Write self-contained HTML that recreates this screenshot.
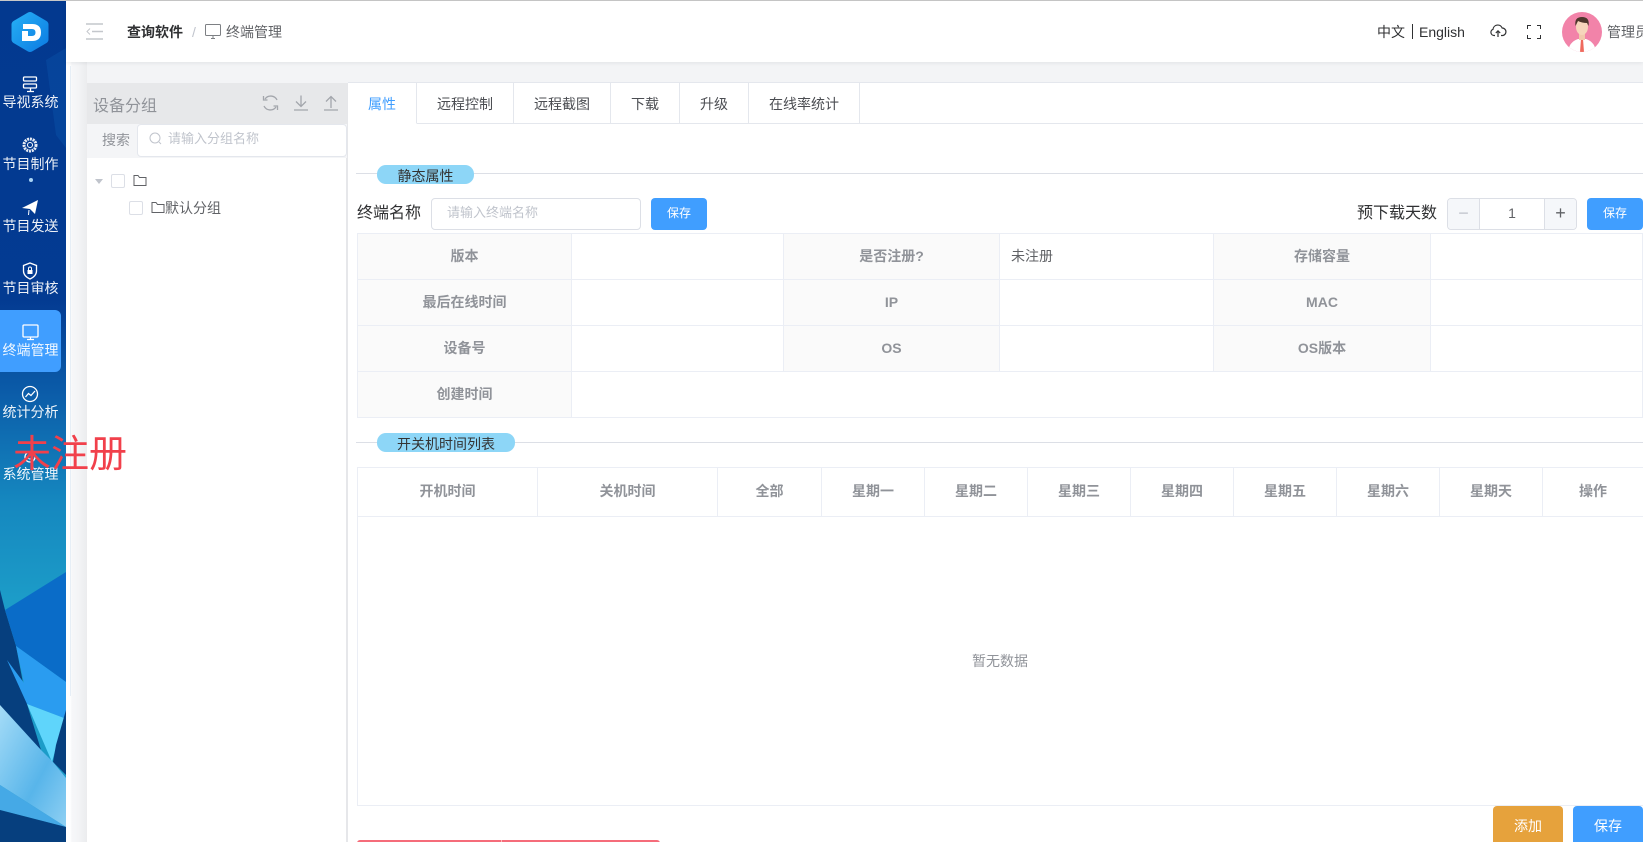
<!DOCTYPE html>
<html lang="zh"><head><meta charset="utf-8"><title>终端管理</title>
<style>
*{box-sizing:border-box;margin:0;padding:0}
html,body{width:1643px;height:842px;overflow:hidden;background:#fff}
body{position:relative;font-family:"Liberation Sans","Noto Sans CJK SC",sans-serif;font-size:14px;color:#606266}
.a{position:absolute}
.t{position:absolute;white-space:nowrap;line-height:20px}
.c{text-align:center}
.nav{position:absolute;left:0;width:61px;text-align:center;color:#fff;font-size:14px;line-height:18px;white-space:nowrap;opacity:.93}
.tab{position:absolute;top:83px;height:41px;border-right:1px solid #e4e7ed;border-bottom:1px solid #e4e7ed;text-align:center;line-height:43px;font-size:14px;color:#4b4d52;background:#fff}
.cell{position:absolute;border-right:1px solid #ebeef5;border-bottom:1px solid #ebeef5;height:46px;line-height:45px;text-align:center;font-size:14px;font-weight:700;color:#909399}
.g{background:#fafafa}
.hc{position:absolute;top:468px;height:49px;border-right:1px solid #ebeef5;border-bottom:1px solid #ebeef5;line-height:47px;text-align:center;font-size:14px;font-weight:700;color:#909399;background:#fff}
.btn{position:absolute;background:#409eff;color:#fff;border-radius:4px;text-align:center}
.pill{position:absolute;background:#8dd6f7;border-radius:9px;color:#333;text-align:center;font-size:14px;line-height:22px;height:19px;overflow:hidden}
.line{position:absolute;left:356px;right:0;height:1px;background:#dcdfe6}
.cb{position:absolute;width:14px;height:14px;border:1px solid #dcdfe6;border-radius:2px;background:#fff}
</style></head><body>

<!-- sidebar -->
<div class="a" style="left:0;top:0;width:66px;height:842px;overflow:hidden;background:linear-gradient(180deg,#03398f 0,#033b92 300px,#0b5ba8 390px,#1587bf 500px,#1c9cc8 600px)">
<svg class="a" style="left:0;top:0" width="66" height="842" viewBox="0 0 66 842">
<defs><linearGradient id="ice" x1="0" y1="0" x2="1" y2="1"><stop offset="0" stop-color="#a5dcf7"/><stop offset=".6" stop-color="#58b5ea"/><stop offset="1" stop-color="#8fd0f3"/></linearGradient></defs>
<polygon points="46,60 66,48 66,148 56,135" fill="#0a4fa5" opacity=".5"/>
<polygon points="0,590 5,610 16,646 27,704 41,750 0,706" fill="#063f7e"/>
<polygon points="5,610 66,572 66,682 16,646" fill="#0a6cc8"/>
<polygon points="16,646 66,682 66,712 64,718 27,704 7,660 24,683" fill="#2a9cf0"/>
<polygon points="27,704 64,718 52,762" fill="#5fd5fb"/>
<polygon points="66,710 56,745 53,762 66,775" fill="#063f7e"/>
<polygon points="0,705 41,750 53,762 66,778 66,827 0,785" fill="url(#ice)"/>
<polygon points="0,785 66,827 0,810" fill="#45a9e6"/>
<polygon points="0,810 66,827 66,842 0,842" fill="#063f7e"/>
</svg>
<!-- logo -->
<svg class="a" style="left:11px;top:11px" width="38" height="42" viewBox="0 0 38 42">
<defs><linearGradient id="lg" x1="0" y1="0" x2="1" y2="1"><stop offset="0" stop-color="#27b0f5"/><stop offset="1" stop-color="#0b7ae2"/></linearGradient></defs>
<path d="M17 1.500 Q19 .5 21 1.500 L35.500 10 Q37.500 11.500 37.500 13.500 L37.500 28.500 Q37.500 30.500 35.500 32 L21 40.500 Q19 41.500 17 40.500 L2.500 32 Q.5 30.500 .5 28.500 L.5 13.500 Q.5 11.500 2.500 10Z" fill="url(#lg)"/>
<path d="M12 13 H21 Q30 13 30 21.500 Q30 30 21 30 H11 V20 H17 V25 H21 Q24.500 25 24.500 21.500 Q24.500 18 21 18 H12Z" fill="#fff"/>
</svg>
<div class="a" style="left:0;top:310px;width:61px;height:62px;background:#409eff;border-radius:0 6px 6px 0"></div>
<svg class="a" style="left:0;top:0" width="66" height="500" fill="none" stroke="#fff" stroke-width="1.300">
<path d="M24.500 77h11a1 1 0 0 1 1 1v2a1 1 0 0 1-1 1h-11a1 1 0 0 1-1-1v-2a1 1 0 0 1 1-1zM24.500 84h11a1 1 0 0 1 1 1v2a1 1 0 0 1-1 1h-11a1 1 0 0 1-1-1v-2a1 1 0 0 1 1-1zM30.500 88v3M27 91.500h7"/>
<circle cx="30" cy="145" r="6" stroke-width="3" stroke-dasharray="2 .8" opacity=".9"/><circle cx="30" cy="145" r="2.500" stroke-width="1"/>
<path d="M22 208 L38 200 L35 214 L30 209Z" fill="#fff" stroke="none"/><path d="M29 210 L28.500 215" stroke-width="1"/>
<path d="M30 263 L36.500 265.500 V271 Q36.500 276 30 279 Q23.500 276 23.500 271 V265.500Z"/><rect x="27.500" y="270" width="5" height="4" fill="#fff" stroke="none"/><path d="M28.500 270 v-1.500 a1.500 1.500 0 0 1 3 0 v1.500" stroke-width="1"/>
<rect x="23" y="325" width="15" height="12" rx="1"/><path d="M30.500 337v2M27 339.500h7" stroke-width="1.200"/>
<circle cx="30" cy="394" r="7.500"/><path d="M25.500 397 L28.500 393.500 L31 395.500 L35 391" stroke-width="1.300"/>
<circle cx="30" cy="457" r="5"/><circle cx="30" cy="457" r="2" stroke-width="1"/>
</svg>
<div class="nav" style="top:93px">导视系统</div>
<div class="nav" style="top:155px">节目制作</div>
<div class="a" style="left:29px;top:178px;width:4px;height:4px;border-radius:50%;background:#a9d4f5"></div>
<div class="nav" style="top:217px">节目发送</div>
<div class="nav" style="top:279px">节目审核</div>
<div class="nav" style="top:341px">终端管理</div>
<div class="nav" style="top:403px">统计分析</div>
<div class="nav" style="top:465px">系统管理</div>
</div>

<!-- topbar -->
<div class="a" style="left:66px;top:0;right:0;height:1px;background:#c8c8c8"></div>
<div class="a" style="left:0;top:0;width:66px;height:1px;background:#c8c8c8"></div>
<div class="a" style="left:66px;top:1px;right:0;height:61px;background:#fff;box-shadow:0 1px 4px rgba(0,21,41,.08);z-index:3"></div>
<div class="a" style="left:66px;top:62px;right:0;height:780px;background:#f3f4f6"></div>
<div class="a" style="left:66px;top:62px;width:21px;height:780px;background:linear-gradient(90deg,#fff 0,#fff 4px,#f6f7f9 6px,#f3f4f6 60%,#ebecee 100%)"></div>
<div class="a" style="left:70px;top:66px;width:1px;height:630px;background:#e6eef6"></div>
<div style="position:absolute;left:0;top:0;z-index:5;width:1643px;height:62px">
<svg class="a" style="left:86px;top:23px" width="18" height="17" fill="none" stroke="#c4c7cc" stroke-width="1.500">
<path d="M0 1h17M6 8.500h11M0 16h17"/><path d="M4 5.500 L1 8.500 L4 11.500" stroke-width="1"/></svg>
<div class="t" style="left:127px;top:22px;font-size:14px;font-weight:700;color:#303133">查询软件</div>
<div class="t" style="left:192px;top:22px;color:#c0c4cc">/</div>
<svg class="a" style="left:205px;top:24px" width="17" height="16" fill="none" stroke="#7d8084" stroke-width="1"><rect x=".5" y=".5" width="15" height="11" rx="1"/><path d="M8 11.500v3M6 14.500h4"/></svg>
<div class="t" style="left:226px;top:22px;font-size:14px;color:#606266">终端管理</div>
<div class="t" style="left:1377px;top:22px;font-size:14px;color:#303133">中文</div>
<div class="a" style="left:1412px;top:24px;width:1px;height:15px;background:#303133"></div>
<div class="t" style="left:1419px;top:22px;font-size:14px;color:#303133">English</div>
<svg class="a" style="left:1490px;top:23px" width="17" height="16" fill="none" stroke="#303133" stroke-width="1.200"><path d="M5 12.500 H4 A3.200 3.200 0 0 1 3 6.300 A4.800 4.800 0 0 1 12.200 5 A3.800 3.800 0 0 1 13 12.500 H11"/><path d="M8 14V8M5.800 10 L8 7.800 L10.200 10"/></svg>
<svg class="a" style="left:1527px;top:25px" width="15" height="15" fill="none" stroke="#303133" stroke-width="1"><path d="M.5 4V.5H4M10 .5h3.500V4M13.500 10v3.500H10M4 13.500H.5V10"/></svg>
<svg class="a" style="left:1562px;top:12px" width="40" height="40" viewBox="0 0 40 40">
<clipPath id="av"><circle cx="20" cy="20" r="20"/></clipPath>
<g clip-path="url(#av)"><rect width="40" height="40" fill="#f283a9"/>
<path d="M6 40 Q7 30 16 27 L24 27 Q33 30 34 40Z" fill="#fff"/>
<path d="M19 27h2l1 13h-4z" fill="#ef6a5e"/>
<rect x="17" y="21" width="6" height="7" fill="#f2c9ad"/>
<ellipse cx="20" cy="15" rx="6" ry="8" fill="#f6d5bb"/>
<path d="M13.500 14 Q12 5 20 5 Q28 5 26.500 14 L25 11 Q20 11 16 9 L15 11Z" fill="#4e362c"/></g></svg>
<div class="t" style="left:1607px;top:22px;font-size:14px;color:#606266">管理员</div>
</div>

<!-- left panel -->
<div class="a" style="left:87px;top:83px;width:261px;height:759px;background:#fff;border-right:2px solid #e6e7ea"></div>
<div class="a" style="left:87px;top:83px;width:260px;height:41px;background:#e7e8ea"></div>
<div class="a" style="left:87px;top:124px;width:260px;height:34px;background:#f4f5f7"></div>
<div class="t" style="left:93px;top:97px;font-size:16px;color:#909399">设备分组</div>
<svg class="a" style="left:262px;top:94px" width="78" height="18" fill="none" stroke="#a3a6ac" stroke-width="1.300">
<path d="M15 6 A7 7 0 0 0 3 5 M1.500 2 V6 H5.500 M2 12 A7 7 0 0 0 14 13 M15.500 16 V12 H11.500"/>
<path d="M39 1.500V12M34 7.500 L39 12.500 L44 7.500M32 16h14"/>
<path d="M69 14 V3M64 7.500 L69 2.500 L74 7.500M62 16h14"/>
</svg>
<div class="t" style="left:102px;top:130px;font-size:14px;color:#909399">搜索</div>
<div class="a" style="left:137px;top:124px;width:210px;height:33px;background:#fff;border:1px solid #e4e7ed;border-radius:4px"></div>
<svg class="a" style="left:148px;top:131px" width="14" height="15" fill="none" stroke="#c0c4cc" stroke-width="1"><circle cx="7" cy="7" r="5"/><path d="M11 11l2 2"/></svg>
<div class="t" style="left:168px;top:129px;font-size:13px;color:#c0c4cc">请输入分组名称</div>
<div class="a" style="left:95px;top:179px;border:4px solid transparent;border-top:5px solid #c0c4cc"></div>
<div class="cb" style="left:111px;top:174px"></div>
<svg class="a" style="left:133px;top:174px" width="14" height="12" fill="none" stroke="#606266" stroke-width="1"><path d="M1 1.500h4l1.500 2H13v8H1z"/></svg>
<div class="cb" style="left:129px;top:201px"></div>
<svg class="a" style="left:151px;top:201px" width="14" height="12" fill="none" stroke="#606266" stroke-width="1"><path d="M1 1.500h4l1.500 2H13v8H1z"/></svg>
<div class="t" style="left:165px;top:198px;font-size:14px;color:#606266">默认分组</div>

<!-- main -->
<div class="a" style="left:348px;top:82px;right:0;height:760px;background:#fff;border-top:1px solid #e4e7ed"></div>
<div class="a" style="left:348px;top:83px;right:0;height:41px;border-bottom:1px solid #e4e7ed"></div>
<div class="tab" style="left:348px;width:69px;color:#409eff;border-bottom-color:#fff">属性</div>
<div class="tab" style="left:417px;width:97px">远程控制</div>
<div class="tab" style="left:514px;width:97px">远程截图</div>
<div class="tab" style="left:611px;width:69px">下载</div>
<div class="tab" style="left:680px;width:69px">升级</div>
<div class="tab" style="left:749px;width:111px">在线率统计</div>

<div class="line" style="top:173px"></div>
<div class="pill" style="left:377px;top:165px;width:97px">静态属性</div>
<div class="t" style="left:357px;top:204px;font-size:16px;color:#303133">终端名称</div>
<div class="a" style="left:431px;top:198px;width:210px;height:32px;border:1px solid #dcdfe6;border-radius:4px;background:#fff"></div>
<div class="t" style="left:447px;top:203px;font-size:13px;color:#c0c4cc">请输入终端名称</div>
<div class="btn" style="left:651px;top:198px;width:56px;height:32px;line-height:31px;font-size:12px">保存</div>

<div class="t" style="left:1357px;top:204px;font-size:16px;color:#303133">预下载天数</div>
<div class="a" style="left:1447px;top:198px;width:130px;height:32px;border:1px solid #dcdfe6;border-radius:4px;background:#fff"></div>
<div class="a c" style="left:1448px;top:199px;width:32px;height:30px;background:#f5f7fa;border-right:1px solid #dcdfe6;border-radius:4px 0 0 4px;line-height:29px;font-size:18px;color:#c0c4cc">−</div>
<div class="a c" style="left:1544px;top:199px;width:32px;height:30px;background:#f5f7fa;border-left:1px solid #dcdfe6;border-radius:0 4px 4px 0;line-height:29px;font-size:18px;color:#606266">+</div>
<div class="t c" style="left:1480px;top:203px;width:64px;font-size:14px;color:#606266">1</div>
<div class="btn" style="left:1587px;top:198px;width:56px;height:32px;line-height:31px;font-size:12px">保存</div>

<!-- info table -->
<div class="a" style="left:357px;top:233px;width:1286px;height:1px;background:#ebeef5"></div>
<div class="a" style="left:357px;top:233px;width:1px;height:185px;background:#ebeef5"></div>
<div class="cell g" style="left:358px;top:234px;width:214px">版本</div>
<div class="cell" style="left:572px;top:234px;width:212px"></div>
<div class="cell g" style="left:784px;top:234px;width:216px">是否注册?</div>
<div class="cell" style="left:1000px;top:234px;width:214px;text-align:left;padding-left:11px;font-weight:400;color:#606266">未注册</div>
<div class="cell g" style="left:1214px;top:234px;width:217px">存储容量</div>
<div class="cell" style="left:1431px;top:234px;width:212px"></div>
<div class="cell g" style="left:358px;top:280px;width:214px">最后在线时间</div>
<div class="cell" style="left:572px;top:280px;width:212px"></div>
<div class="cell g" style="left:784px;top:280px;width:216px">IP</div>
<div class="cell" style="left:1000px;top:280px;width:214px"></div>
<div class="cell g" style="left:1214px;top:280px;width:217px">MAC</div>
<div class="cell" style="left:1431px;top:280px;width:212px"></div>
<div class="cell g" style="left:358px;top:326px;width:214px">设备号</div>
<div class="cell" style="left:572px;top:326px;width:212px"></div>
<div class="cell g" style="left:784px;top:326px;width:216px">OS</div>
<div class="cell" style="left:1000px;top:326px;width:214px"></div>
<div class="cell g" style="left:1214px;top:326px;width:217px">OS版本</div>
<div class="cell" style="left:1431px;top:326px;width:212px"></div>
<div class="cell g" style="left:358px;top:372px;width:214px">创建时间</div>
<div class="cell" style="left:572px;top:372px;width:1071px"></div>

<!-- schedule table -->
<div class="line" style="top:442px"></div>
<div class="pill" style="left:377px;top:433px;width:138px">开关机时间列表</div>
<div class="a" style="left:357px;top:467px;width:1286px;height:339px;border:1px solid #ebeef5;border-right:0"></div>
<div class="hc" style="left:358px;width:180px">开机时间</div>
<div class="hc" style="left:538px;width:180px">关机时间</div>
<div class="hc" style="left:718px;width:104px">全部</div>
<div class="hc" style="left:822px;width:103px">星期一</div>
<div class="hc" style="left:925px;width:103px">星期二</div>
<div class="hc" style="left:1028px;width:103px">星期三</div>
<div class="hc" style="left:1131px;width:103px">星期四</div>
<div class="hc" style="left:1234px;width:103px">星期五</div>
<div class="hc" style="left:1337px;width:103px">星期六</div>
<div class="hc" style="left:1440px;width:103px">星期天</div>
<div class="hc" style="left:1543px;width:100px;border-right:0">操作</div>
<div class="t c" style="left:900px;top:651px;width:200px;font-size:14px;color:#909399">暂无数据</div>

<div class="btn" style="left:1493px;top:806px;width:70px;height:40px;line-height:40px;background:#e6a23c;font-size:14px">添加</div>
<div class="btn" style="left:1573px;top:806px;width:70px;height:40px;line-height:40px;font-size:14px">保存</div>
<div class="a" style="left:357px;top:840px;width:303px;height:4px;background:#f56c7a;border-radius:3px 3px 0 0"></div>
<div class="a" style="left:501px;top:840px;width:1px;height:2px;background:#fbb"></div>

<!-- watermark -->
<div class="t" style="left:13px;top:428px;font-size:38px;line-height:46px;color:#f1404b;z-index:9;font-family:'Noto Sans CJK SC',sans-serif;font-weight:400">未注册</div>
</body></html>
